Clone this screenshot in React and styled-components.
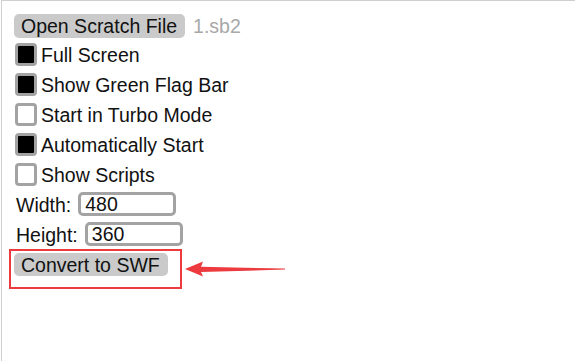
import React from "react";
import styled, { createGlobalStyle } from "styled-components";

const GlobalStyle = createGlobalStyle`
  html, body {
    margin: 0;
    padding: 0;
    background: #fff;
  }
  body {
    font-family: "Liberation Sans", Arial, sans-serif;
    font-size: 19.5px;
    color: #111;
  }
`;

const options = [
  { label: "Full Screen", checked: true },
  { label: "Show Green Flag Bar", checked: true },
  { label: "Start in Turbo Mode", checked: false },
  { label: "Automatically Start", checked: true },
  { label: "Show Scripts", checked: false },
];

function App() {
  return (
    <>
      <GlobalStyle />
      <Frame>
        <FileRow>
          <GrayButton>Open Scratch File</GrayButton>
          <FileName>1.sb2</FileName>
        </FileRow>
        {options.map((opt) => (
          <CheckRow key={opt.label}>
            <Box checked={opt.checked} />
            <CheckText>{opt.label}</CheckText>
          </CheckRow>
        ))}
        <FieldRow>
          <FieldLabel>Width:</FieldLabel>
          <NumInput defaultValue="480" />
        </FieldRow>
        <FieldRow>
          <FieldLabel>Height:</FieldLabel>
          <NumInput defaultValue="360" />
        </FieldRow>
        <ConvertRow>
          <Highlight>
            <GrayButton $slim>Convert to SWF</GrayButton>
          </Highlight>
          <Arrow />
        </ConvertRow>
      </Frame>
    </>
  );
}

// red annotation arrow pointing left at the convert button
function Arrow() {
  return (
    <svg width="102" height="18" viewBox="0 0 102 18" style={{ marginLeft: 3 }}>
      <path
        d="M0 9 L18 1.5 L16 6.8 L100 8.6 L100 9.6 L16 12 L18 16.5 Z"
        fill="#ec3a3e"
      />
    </svg>
  );
}

const Frame = styled.div`
  box-sizing: border-box;
  width: 575px;
  height: 361px;
  margin-left: 1px;
  border-left: 1px solid #cfcfcf;
  border-top: 1px solid #cfcfcf;
  padding: 12px 0 0 12px;
  display: flex;
  flex-direction: column;
  align-items: flex-start;
`;

const FileRow = styled.div`
  display: flex;
  align-items: center;
  gap: 8px;
  height: 26px;
`;

const GrayButton = styled.div`
  background: #cacaca;
  border-radius: 5px;
  padding: 0 8px 0 7px;
  height: ${(p) => (p.$slim ? "23px" : "24px")};
  line-height: ${(p) => (p.$slim ? "24px" : "25px")};
  color: #111;
  white-space: nowrap;
`;

const FileName = styled.span`
  color: #a8a8a8;
`;

const CheckRow = styled.label`
  display: flex;
  align-items: center;
  gap: 4px;
  height: 30px;
  margin-left: 1px;
`;

const CheckText = styled.span`
  padding-top: 2px;
`;

const Box = styled.span`
  box-sizing: border-box;
  width: 22px;
  height: 23px;
  border: 3px solid #a3a3a3;
  border-radius: 4px;
  background: ${(p) => (p.checked ? "#000" : "#fff")};
`;

const FieldRow = styled.div`
  display: flex;
  align-items: center;
  gap: 7px;
  height: 30px;
  margin-left: 2px;
`;

const FieldLabel = styled.span`
  white-space: nowrap;
  padding-top: 2px;
`;

const NumInput = styled.input`
  box-sizing: border-box;
  width: 98px;
  height: 24px;
  border: 3px solid #a3a3a3;
  border-radius: 5px;
  padding: 1px 4px 0;
  font: 19.5px "Liberation Sans", Arial, sans-serif;
  color: #111;
  outline: none;
`;

const ConvertRow = styled.div`
  display: flex;
  align-items: center;
  margin-left: -5px;
`;

const Highlight = styled.div`
  display: flex;
  border: 2px solid #ec3a3e;
  padding: 2px 12px 11px 3px;
`;

export default App;
